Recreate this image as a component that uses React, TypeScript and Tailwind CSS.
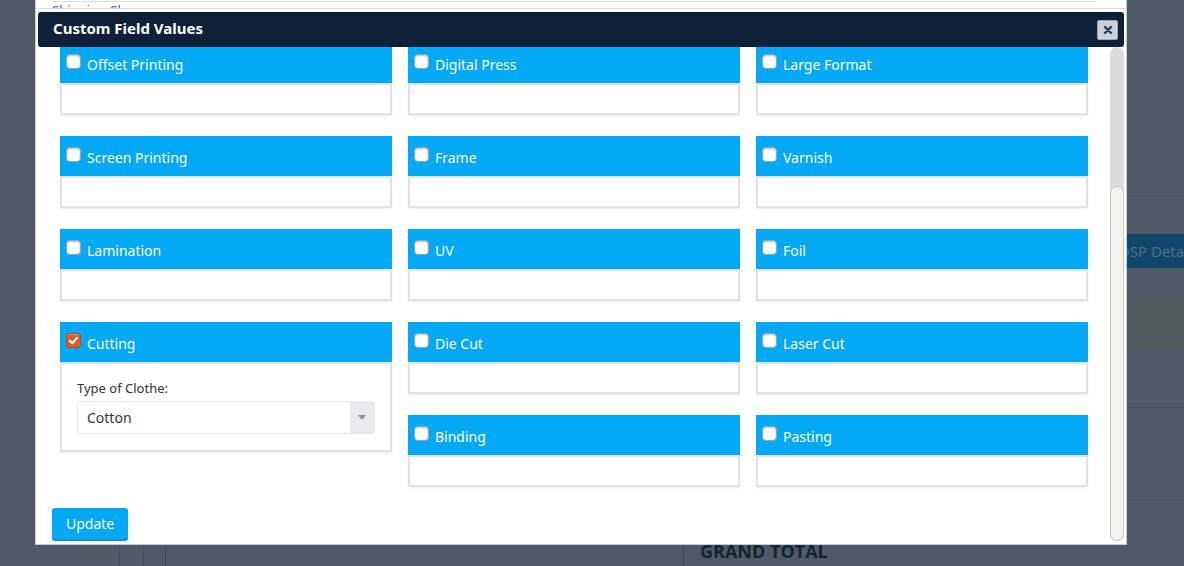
import React from "react";

const font = { fontFamily: '"Noto Sans", "Open Sans", sans-serif' };

function Checkbox({ checked }: { checked?: boolean }) {
  if (checked) {
    return (
      <span className="w-[15px] h-[15px] rounded-[3px] bg-[#dc5e2a] border border-[#b8461a] flex items-center justify-center shrink-0 shadow-[inset_0_1px_0_rgba(255,255,255,0.3)]">
        <svg width="11" height="11" viewBox="0 0 12 12">
          <path d="M2 6.3 L4.8 9 L10 3" stroke="#fff" strokeWidth="2.2" fill="none" strokeLinecap="round" strokeLinejoin="round" />
        </svg>
      </span>
    );
  }
  return (
    <span className="w-[15px] h-[15px] rounded-[4px] bg-white border border-[#9aa3ab] shrink-0 shadow-[inset_0_1px_2px_rgba(0,0,0,0.25)]" />
  );
}

function Panel({
  title,
  checked,
  children,
  bodyH = "h-[32px]",
}: {
  title: string;
  checked?: boolean;
  children?: React.ReactNode;
  bodyH?: string;
}) {
  return (
    <div className="flex flex-col">
      <div className="h-[40px] bg-[#03a9f4] flex items-start pl-[6px] pt-[11px] gap-[6px]">
        <Checkbox checked={checked} />
        <span className="text-white text-[14px] leading-[20px] mt-[1px]">{title}</span>
      </div>
      <div className={`${bodyH} bg-white border-2 border-[#e2e2e2] shadow-[0_1px_2px_rgba(0,0,0,0.08)]`}>{children}</div>
    </div>
  );
}

export default function App() {
  return (
    <div className="w-[1184px] h-[566px] bg-[#4f5a66] relative overflow-hidden" style={font}>
      {/* underlying page (dimmed) */}
      <div className="absolute left-[1126px] top-0 w-[58px] h-[566px] flex flex-col">
        <div className="h-[197px] border-b border-[#465059]" />
        <div className="h-[37px]" />
        <div className="h-[34px] bg-[#10476a] flex items-center overflow-hidden">
          <span className="text-[#4c6e88] text-[15px] whitespace-nowrap ml-[-8px]">OSP Details</span>
        </div>
        <div className="h-[30px]" />
        <div className="h-[52px] bg-[#515b5e]" />
        <div className="h-[58px] border-b border-[#465059]" />
        <div className="h-[93px] border-b border-[#465059]" />
      </div>
      <div className="absolute left-0 top-[544px] w-[1184px] h-[22px] flex">
        <div className="w-[119px]" />
        <div className="w-[24px] border-l border-[#47515c]" />
        <div className="w-[22px] border-l border-[#47515c]" />
        <div className="w-[518px] border-l border-[#3d4752]" />
        <div className="flex-1 border-l border-[#3d4752] pl-[16px]">
          <span className="text-[#15222f] text-[18px] font-bold leading-[16px] block mt-[-1px]" style={{ fontFamily: '"Open Sans", sans-serif' }}>
            GRAND TOTAL
          </span>
        </div>
      </div>

      {/* dialog */}
      <div className="absolute left-[35px] top-0 w-[1092px] h-[545px] bg-white border border-[#c8cdd3] border-t-0 flex flex-col">
        {/* top strip of underlying content */}
        <div className="h-[12px] relative overflow-hidden shrink-0">
          <div className="mx-[16px] mr-[30px] h-[2px] border-b border-[#d9dde2]" />
          <div className="pl-[16px] h-[6px] overflow-hidden">
            <span className="text-[#2a6fb0] text-[13px] leading-[13px] block mt-[2px]">Shipping Charges</span>
          </div>
          <div className="h-[2px] border-t border-[#d6dbe1]" />
        </div>
        {/* title bar */}
        <div className="h-[35px] mx-[2px] bg-[#0e2139] rounded-[3px] flex items-center justify-between pl-[15px] pr-[6px] shrink-0 relative z-10">
          <span className="text-white text-[15px] font-bold mt-[-2px]">Custom Field Values</span>
          <span className="w-[21px] h-[20px] bg-[#c9d1dc] border border-[#9aa6b5] rounded-[2px] flex items-center justify-center">
            <svg width="10" height="10" viewBox="0 0 10 10">
              <path d="M2 2 L8 8 M8 2 L2 8" stroke="#2b3a4c" strokeWidth="2.4" strokeLinecap="round" />
            </svg>
          </span>
        </div>
        {/* body */}
        <div className="flex-1 flex min-h-0">
          <div className="flex-1 overflow-hidden">
            <div className="mt-[-4px] flex flex-col">
              <div className="grid grid-cols-[332px_332px_332px] gap-x-[16px] ml-[24px]">
                <div className="flex flex-col gap-[21px]">
                  <Panel title="Offset Printing" />
                  <Panel title="Screen Printing" />
                  <Panel title="Lamination" />
                  <Panel title="Cutting" checked bodyH="h-[90px]">
                    <div className="pl-[15px] pr-[15px] pt-[15px]">
                      <div className="text-[13px] text-[#333] leading-[18px]">Type of Clothe:</div>
                      <div className="mt-[4px] h-[33px] border border-[#e3e6ea] rounded-[3px] flex items-stretch overflow-hidden">
                        <span className="flex-1 pl-[9px] flex items-center text-[14px] text-[#333]">Cotton</span>
                        <span className="w-[24px] bg-[#e8eaed] flex items-center justify-center">
                          <svg width="8" height="5" viewBox="0 0 8 5">
                            <path d="M0 0 L8 0 L4 5 Z" fill="#8a8f96" />
                          </svg>
                        </span>
                      </div>
                    </div>
                  </Panel>
                </div>
                <div className="flex flex-col gap-[21px]">
                  <Panel title="Digital Press" />
                  <Panel title="Frame" />
                  <Panel title="UV" />
                  <Panel title="Die Cut" />
                  <Panel title="Binding" />
                </div>
                <div className="flex flex-col gap-[21px]">
                  <Panel title="Large Format" />
                  <Panel title="Varnish" />
                  <Panel title="Foil" />
                  <Panel title="Laser Cut" />
                  <Panel title="Pasting" />
                </div>
              </div>
              <div className="mt-[21px] ml-[16px]">
                <button className="h-[33px] px-[14px] bg-[#03a9f4] text-white text-[14px] rounded-[3px] border-b-2 border-[#0a8fd0]">
                  Update
                </button>
              </div>
            </div>
          </div>
          {/* scrollbar */}
          <div className="w-[14px] mr-[2px] pb-[3px] flex flex-col">
            <div className="flex-1 rounded-full bg-[#dcdcdc] flex flex-col justify-end">
              <div className="h-[355px] rounded-full bg-[#f4f2ef] border border-[#c6c6c6]" />
            </div>
          </div>
        </div>
      </div>
    </div>
  );
}
